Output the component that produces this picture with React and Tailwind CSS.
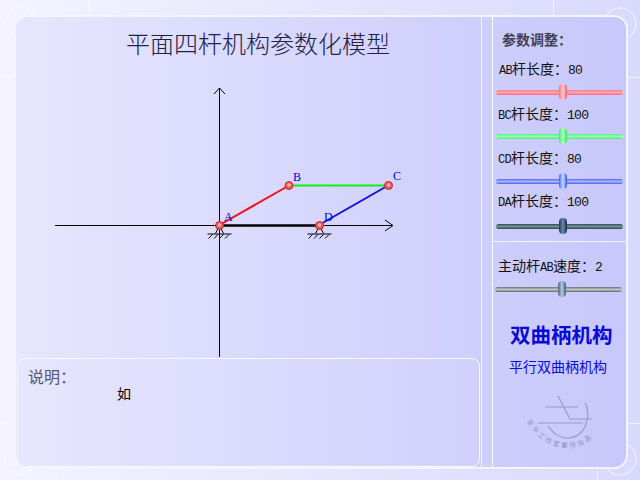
const cjk = { fontFamily: '"Liberation Serif","Noto Sans CJK SC",serif' };
const mono = { fontFamily: '"Liberation Mono","Noto Sans CJK SC",monospace' };

function Label({ pre = '', tag = '', post, value, className = '' }) {
  return (
    <div className={`text-[14px] leading-[20px] h-[20px] text-[#111] whitespace-nowrap ${className}`} style={cjk}>
      {pre}
      <span className="text-[12px] tracking-[-0.7px]" style={mono}>{tag}</span>
      {post}：<span className="text-[13px] tracking-[-0.7px]" style={mono}>{value}</span>
    </div>
  );
}

function Slider({ track, thumb, pos, className = '' }) {
  return (
    <div className={`relative h-[5px] w-[127px] rounded-full ${track} ${className}`}>
      <div className={`absolute top-[-6px] w-[8px] h-[16px] rounded-[4px] ${thumb}`} style={{ left: pos }} />
    </div>
  );
}

function Backdrop() {
  return (
    <svg className="absolute inset-0" width="640" height="480" fill="none" stroke="#ffffff" strokeOpacity="0.65">
      <path d="M89.5 0V15M553.5 0V15M57.5 468V480M597.5 468V480M0 77.5H14M627 77.5H640M0 422.5H14M627 423.5H640" />
      <circle cx="21" cy="22" r="15" strokeOpacity="0.5" strokeWidth="1.5" />
      <circle cx="620" cy="24" r="16" strokeOpacity="0.5" strokeWidth="1.5" />
      <circle cx="20" cy="460" r="15" strokeOpacity="0.5" strokeWidth="1.5" />
      <circle cx="620" cy="459" r="16" strokeOpacity="0.5" strokeWidth="1.5" />
    </svg>
  );
}

function Joint({ x, y }) {
  return (
    <g>
      <circle cx={x} cy={y} r="4" fill="#e85a5a" stroke="#c03030" strokeWidth="1" />
      <circle cx={x} cy={y - 0.5} r="1.8" fill="#ffb0a8" />
    </g>
  );
}

function Ground({ x, y }) {
  const t = [-7, -1.5, 4, 9.5];
  return (
    <g stroke="#000" strokeWidth="1" fill="none">
      <path d={`M${x - 12} ${y + 8.5}H${x + 12}`} />
      <path d={`M${x - 4} ${y + 8}L${x} ${y}L${x + 4} ${y + 8}`} />
      {t.map((d) => (
        <path key={d} d={`M${x + d} ${y + 9}l-4 4`} />
      ))}
    </g>
  );
}

function Diagram() {
  const ox = -17, oy = -66;
  return (
    <svg width="463" height="292" className="block" style={cjk}>
      <g transform={`translate(${ox} ${oy})`}>
        <path d="M55 225.5H392M385 220l8 5.5l-8 5.5M219.5 88V357M214 94l5.5-6l5.5 6" stroke="#000" fill="none" strokeWidth="1" />
        <path d="M219 225.5H319" stroke="#000" strokeWidth="2.5" />
        <path d="M219.5 225L289 185.5" stroke="#f01020" strokeWidth="2" />
        <path d="M289 185.5H388" stroke="#10f010" strokeWidth="2" />
        <path d="M319 225L388 185.5" stroke="#1010e8" strokeWidth="2" />
        <Ground x={219.5} y={225.5} />
        <Ground x={319.5} y={225.5} />
        <Joint x={289} y={185.5} />
        <Joint x={388.5} y={185.5} />
        <Joint x={219.5} y={225.5} />
        <Joint x={319.5} y={225.5} />
        <g fill="#0000e0" fontSize="12">
          <text x="224" y="221">A</text>
          <text x="293" y="181">B</text>
          <text x="393" y="180">C</text>
          <text x="324" y="221">D</text>
        </g>
      </g>
    </svg>
  );
}

function Logo() {
  return (
    <svg width="80" height="62" viewBox="0 0 80 62" className="block" fill="none">
      <path d="M34 1L46 24H68M21 12H54M14 28H59M61 8C68 20 62 43 43 43C36 43 29 38 24 31" stroke="#9a9ac4" strokeWidth="1.2" />
      <path id="logoArc" d="M3 26C14 50 50 66 72 38" stroke="none" />
      <text fontSize="6.5" fill="#8f8fb8" letterSpacing="2.4" style={cjk}>
        <textPath href="#logoArc">张平工作室著作出品</textPath>
      </text>
    </svg>
  );
}

export default function App() {
  return (
    <div className="relative w-[640px] h-[480px] overflow-hidden pt-[15px] pl-[14px] bg-linear-to-r from-[#f4f3ff] to-[#d9d9fd]" style={cjk}>
      <Backdrop />
      <div className="relative flex w-[614px] h-[454px] border-2 border-[#f4f4ff] rounded-[14px] bg-linear-to-r from-[#e6e6fe] to-[#c7c7fb] overflow-hidden">
        <div className="flex flex-col w-[465px] shrink-0">
          <h1 className="h-[49px] pt-[12px] pl-[19px] text-[24px] leading-[32px] font-light text-center text-[#20204a]">平面四杆机构参数化模型</h1>
          <div className="h-[292px] pl-px">
            <Diagram />
          </div>
          <div className="ml-px w-[463px] h-[110px] border border-[#f8f8ff] rounded-[8px] pt-[11px] pl-[10px] bg-linear-to-r from-[#e6e6fe] to-[#d0d0fc]">
            <div className="text-[16px] leading-[16px] text-[#555570]">说明：</div>
            <div className="pl-[89px] text-[14px] leading-[18px] text-black">如</div>
          </div>
        </div>
        <div className="w-[12px] shrink-0 border-x border-[#f8f8ff] bg-[#cfcffc]" />
        <div className="flex flex-col flex-1 min-w-0">
          <div className="h-[225px] border-b border-[#f4f4ff] pl-[3px]">
            <div className="pl-[6px] pt-[14px] h-[43px] text-[14px] leading-[20px] font-bold text-[#3f3f55]">参数调整：</div>
            <Label className="pl-[3px]" tag="AB" post="杆长度" value="80" />
            <Slider className="mt-[10px]" pos="63px" track="bg-linear-to-b from-[#fb7c88] via-[#ffa8b2] to-[#f86878]" thumb="bg-linear-to-r from-[#f87080] via-[#ffc8d0] to-[#f06070]" />
            <Label className="mt-[10px] pl-[2px]" tag="BC" post="杆长度" value="100" />
            <Slider className="mt-[9px]" pos="63px" track="bg-linear-to-b from-[#48f47c] via-[#98ffb8] to-[#40ec70]" thumb="bg-linear-to-r from-[#30e860] via-[#b0ffc8] to-[#30e060]" />
            <Label className="mt-[10px] pl-[2px]" tag="CD" post="杆长度" value="80" />
            <Slider className="mt-[10px]" pos="63px" track="bg-linear-to-b from-[#5868f4] via-[#a8b4ff] to-[#5060ec]" thumb="bg-linear-to-r from-[#4060f0] via-[#d0dcff] to-[#3050e0]" />
            <Label className="mt-[8px] pl-[2px]" tag="DA" post="杆长度" value="100" />
            <Slider className="mt-[12px]" pos="63px" track="bg-linear-to-b from-[#28505e] via-[#808c90] to-[#204858]" thumb="bg-linear-to-r from-[#1c3c58] via-[#6c8cac] to-[#142c48]" />
          </div>
          <div className="flex flex-col flex-1 min-h-0">
            <Label className="pl-[5px] mt-[15px]" pre="主动杆" tag="AB" post="速度" value="2" />
            <Slider className="mt-[10px] ml-[2px]" pos="63px" track="bg-linear-to-b from-[#5c7280] via-[#c8c8c0] to-[#546a78]" thumb="bg-linear-to-r from-[#406888] via-[#b8cce0] to-[#386080]" />
            <div className="mt-[30px] pl-[17px] text-[20.5px] leading-[28px] font-bold text-[#0808d8] whitespace-nowrap">双曲柄机构</div>
            <div className="mt-[8px] pl-[16px] text-[14px] leading-[20px] text-[#0808e0] whitespace-nowrap">平行双曲柄机构</div>
            <div className="mt-[17px] pl-[31px]">
              <Logo />
            </div>
          </div>
        </div>
      </div>
    </div>
  );
}
